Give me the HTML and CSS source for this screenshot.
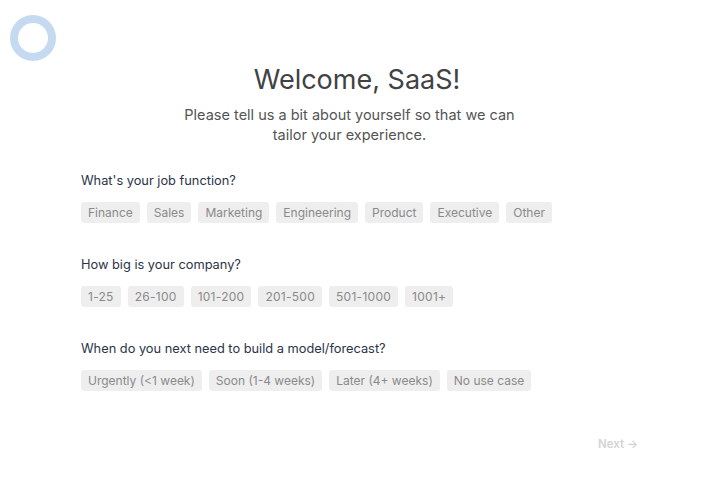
FILE: index.html
```html
<!DOCTYPE html>
<html lang="en">
  <head>
    <meta name="viewport" content="width=device-width, initial-scale=1.0" />
    <link rel="stylesheet" href="styles.css">
  </head>
  <body>
    <div class="logo"></div>

    <header class="intro">
      <h1>Welcome, SaaS!</h1>
      <p>Please tell us a bit about yourself so that we can tailor your experience.</p>
    </header>

    <form class="survey" onsubmit="return false;">
      <div class="question">
        <label>What's your job function?</label>
        <div class="chips">
          <button type="button" class="chip">Finance</button>
          <button type="button" class="chip">Sales</button>
          <button type="button" class="chip">Marketing</button>
          <button type="button" class="chip">Engineering</button>
          <button type="button" class="chip">Product</button>
          <button type="button" class="chip">Executive</button>
          <button type="button" class="chip">Other</button>
        </div>
      </div>

      <div class="question">
        <label>How big is your company?</label>
        <div class="chips numeric">
          <button type="button" class="chip">1-25</button>
          <button type="button" class="chip">26-100</button>
          <button type="button" class="chip">101-200</button>
          <button type="button" class="chip">201-500</button>
          <button type="button" class="chip">501-1000</button>
          <button type="button" class="chip">1001+</button>
        </div>
      </div>

      <div class="question">
        <label>When do you next need to build a model/forecast?</label>
        <div class="chips">
          <button type="button" class="chip">Urgently (&lt;1 week)</button>
          <button type="button" class="chip">Soon (1-4 weeks)</button>
          <button type="button" class="chip">Later (4+ weeks)</button>
          <button type="button" class="chip">No use case</button>
        </div>
      </div>

      <div class="actions">
        <button type="submit" class="next" disabled>Next &rarr;</button>
      </div>
    </form>
  </body>
</html>
```

FILE: styles.css
```css
body {
  margin: 0;
  font-family: "Inter", sans-serif;
  background-color: #fff;
  color: #333;
}
.logo {
  position: absolute;
  top: 15px;
  left: 10px;
  width: 30px;
  height: 30px;
  border: 8px solid #c5d9f1;
  border-radius: 50%;
}
.intro {
  text-align: center;
  padding-top: 63px;
}
.intro h1 {
  margin: 0;
  padding-left: 9px;
  font-size: 27px;
  font-weight: 400;
  line-height: 34px;
  color: #404245;
}
.intro p {
  margin: 8px auto 0;
  padding-right: 6px;
  max-width: 345px;
  font-size: 14.5px;
  line-height: 20px;
  color: #555;
}
.survey {
  padding: 27px 67px 0 81px;
  display: flex;
  flex-direction: column;
  gap: 33px;
}
.question {
  display: flex;
  flex-direction: column;
  gap: 12px;
}
label {
  font-size: 12.8px;
  line-height: 18px;
  color: #2a3447;
}
.chips {
  display: flex;
  flex-wrap: wrap;
  gap: 7px;
}
.chips.numeric .chip {
  letter-spacing: 0.27px;
}
.chip {
  font-family: "Inter", sans-serif;
  font-size: 12px;
  line-height: 15px;
  padding: 3px 7px;
  border: none;
  border-radius: 3px;
  background-color: #eeeeee;
  color: #8a8a8a;
  cursor: pointer;
}
.actions {
  display: flex;
  justify-content: flex-end;
  padding-top: 13px;
}
.next {
  font-family: "Inter", sans-serif;
  font-size: 11.5px;
  line-height: 15px;
  font-weight: 600;
  background: none;
  border: none;
  padding: 0;
  color: #d4d4d4;
}
```
